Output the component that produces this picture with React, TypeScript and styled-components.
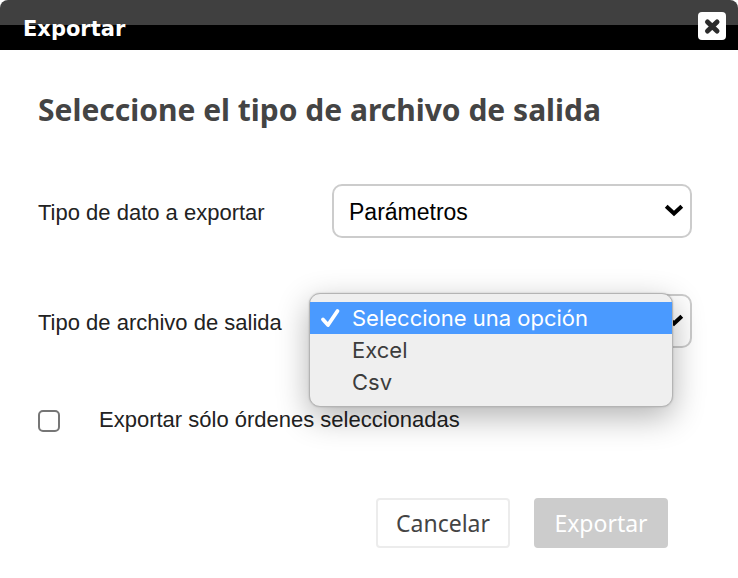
import React, { useState } from 'react';
import styled, { createGlobalStyle } from 'styled-components';

const GlobalStyle = createGlobalStyle`
  *, *::before, *::after { box-sizing: border-box; }
  body {
    margin: 0;
    background: #fff;
    font-family: 'Liberation Sans', Arial, sans-serif;
    font-size: 22px;
    color: #222;
  }
`;

const Dialog = styled.section`
  width: 100%;
  background: #fff;
`;

const TitleBar = styled.header`
  display: flex;
  align-items: center;
  justify-content: space-between;
  height: 50px;
  padding: 0 12px 0 23px;
  border-radius: 8px 8px 0 0;
  background: linear-gradient(#404040 50%, #000 50%);
`;

const Title = styled.h1`
  margin: 0;
  padding-top: 8px;
  font: 700 21px/28px 'DejaVu Sans', sans-serif;
  color: #fff;
`;

const CloseButton = styled.button`
  display: flex;
  align-items: center;
  justify-content: center;
  width: 28px;
  height: 28px;
  margin-top: 2px;
  padding: 0;
  border: 0;
  border-radius: 4px;
  background: #fff;
  cursor: pointer;
`;

const Form = styled.form`
  padding: 40px 46px 30px 38px;
`;

const Heading = styled.h2`
  margin: 0 0 54px;
  font: 700 30px/40px 'Noto Sans', sans-serif;
  color: #444;
`;

const Fields = styled.div`
  display: grid;
  gap: 56px;
`;

const Field = styled.div`
  display: grid;
  grid-template-columns: 294px 1fr;
  align-items: center;
`;

const Label = styled.label`
  padding-top: 4px;
  line-height: 28px;
`;

const SelectBox = styled.div`
  position: relative;
`;

const Select = styled.select`
  display: block;
  appearance: none;
  width: 100%;
  height: 54px;
  padding: 2px 40px 0 15px;
  border: 2px solid #ccc;
  border-radius: 10px;
  background: #fff;
  font: 23px 'Liberation Sans', Arial, sans-serif;
  color: #000;
`;

const Chevron = styled.svg`
  position: absolute;
  top: 18px;
  right: 8px;
  pointer-events: none;
`;

const Menu = styled.ul`
  position: absolute;
  z-index: 1;
  top: -1px;
  left: -23px;
  right: 19px;
  margin: 0;
  padding: 8px 0;
  border: 1px solid #b4b4b4;
  border-radius: 11px;
  background: #efefef;
  box-shadow: 0 10px 32px rgba(0, 0, 0, 0.3), 0 0 2px rgba(0, 0, 0, 0.2);
  list-style: none;
`;

const Option = styled.li<{ $active: boolean }>`
  display: flex;
  align-items: center;
  height: 32px;
  padding-left: 10px;
  background: ${(p) => (p.$active ? '#4a9aff' : 'transparent')};
  color: ${(p) => (p.$active ? '#fff' : '#3c3c3c')};
  font: 22px/32px Inter, sans-serif;
`;

const Mark = styled.span`
  display: flex;
  width: 32px;
`;

const CheckRow = styled.div`
  display: flex;
  align-items: center;
  gap: 39px;
  margin-top: 54px;
`;

const Checkbox = styled.input`
  appearance: none;
  width: 22px;
  height: 22px;
  margin: 6px 0 0;
  border: 2px solid #767676;
  border-radius: 5px;
  background: #fff;
  &:checked { background: #4a9aff; }
`;

const Actions = styled.div`
  display: flex;
  justify-content: flex-end;
  gap: 24px;
  margin-top: 64px;
  padding-right: 24px;
`;

const Button = styled.button<{ $primary?: boolean }>`
  width: 134px;
  height: 50px;
  padding: 0;
  border: 2px solid ${(p) => (p.$primary ? '#ccc' : '#ececec')};
  border-radius: 4px;
  background: ${(p) => (p.$primary ? '#ccc' : '#fff')};
  color: ${(p) => (p.$primary ? '#fff' : '#444')};
  font: 23px/28px 'Noto Sans', sans-serif;
`;

const options = ['Seleccione una opción', 'Excel', 'Csv'];

const Arrow = () => (
  <Chevron width="20" height="16" viewBox="0 0 20 16" aria-hidden="true">
    <path d="M2.2 4.2 10 11.5 17.8 4.2" fill="none" stroke="#000" strokeWidth="4" />
  </Chevron>
);

export default function App() {
  const [output, setOutput] = useState(options[0]);
  return (
    <>
      <GlobalStyle />
      <Dialog role="dialog" aria-labelledby="title">
        <TitleBar>
          <Title id="title">Exportar</Title>
          <CloseButton type="button" aria-label="Cerrar">
            <svg width="18" height="18" viewBox="0 0 18 18" aria-hidden="true">
              <path d="M4.5 5 14 14M14 5 4.5 14" stroke="#2b2b2b" strokeWidth="5" strokeLinecap="round" />
            </svg>
          </CloseButton>
        </TitleBar>
        <Form>
          <Heading>Seleccione el tipo de archivo de salida</Heading>
          <Fields>
            <Field>
              <Label htmlFor="data">Tipo de dato a exportar</Label>
              <SelectBox>
                <Select id="data">
                  <option>Parámetros</option>
                </Select>
                <Arrow />
              </SelectBox>
            </Field>
            <Field>
              <Label htmlFor="output">Tipo de archivo de salida</Label>
              <SelectBox>
                <Select id="output" value={output} onChange={(e) => setOutput(e.target.value)}>
                  {options.map((o) => (
                    <option key={o}>{o}</option>
                  ))}
                </Select>
                <Arrow />
                <Menu role="listbox" aria-label="Tipo de archivo de salida">
                  {options.map((o) => (
                    <Option
                      key={o}
                      role="option"
                      aria-selected={o === output}
                      $active={o === output}
                      onClick={() => setOutput(o)}
                    >
                      <Mark>
                        {o === output && (
                          <svg width="22" height="22" viewBox="0 0 22 22" aria-hidden="true">
                            <path
                              d="M3 12.5 8 18 17.5 4"
                              fill="none"
                              stroke="#fff"
                              strokeWidth="3.8"
                              strokeLinecap="round"
                              strokeLinejoin="round"
                            />
                          </svg>
                        )}
                      </Mark>
                      {o}
                    </Option>
                  ))}
                </Menu>
              </SelectBox>
            </Field>
          </Fields>
          <CheckRow>
            <Checkbox type="checkbox" id="only" />
            <Label htmlFor="only">Exportar sólo órdenes seleccionadas</Label>
          </CheckRow>
          <Actions>
            <Button type="button">Cancelar</Button>
            <Button type="submit" $primary disabled>
              Exportar
            </Button>
          </Actions>
        </Form>
      </Dialog>
    </>
  );
}
